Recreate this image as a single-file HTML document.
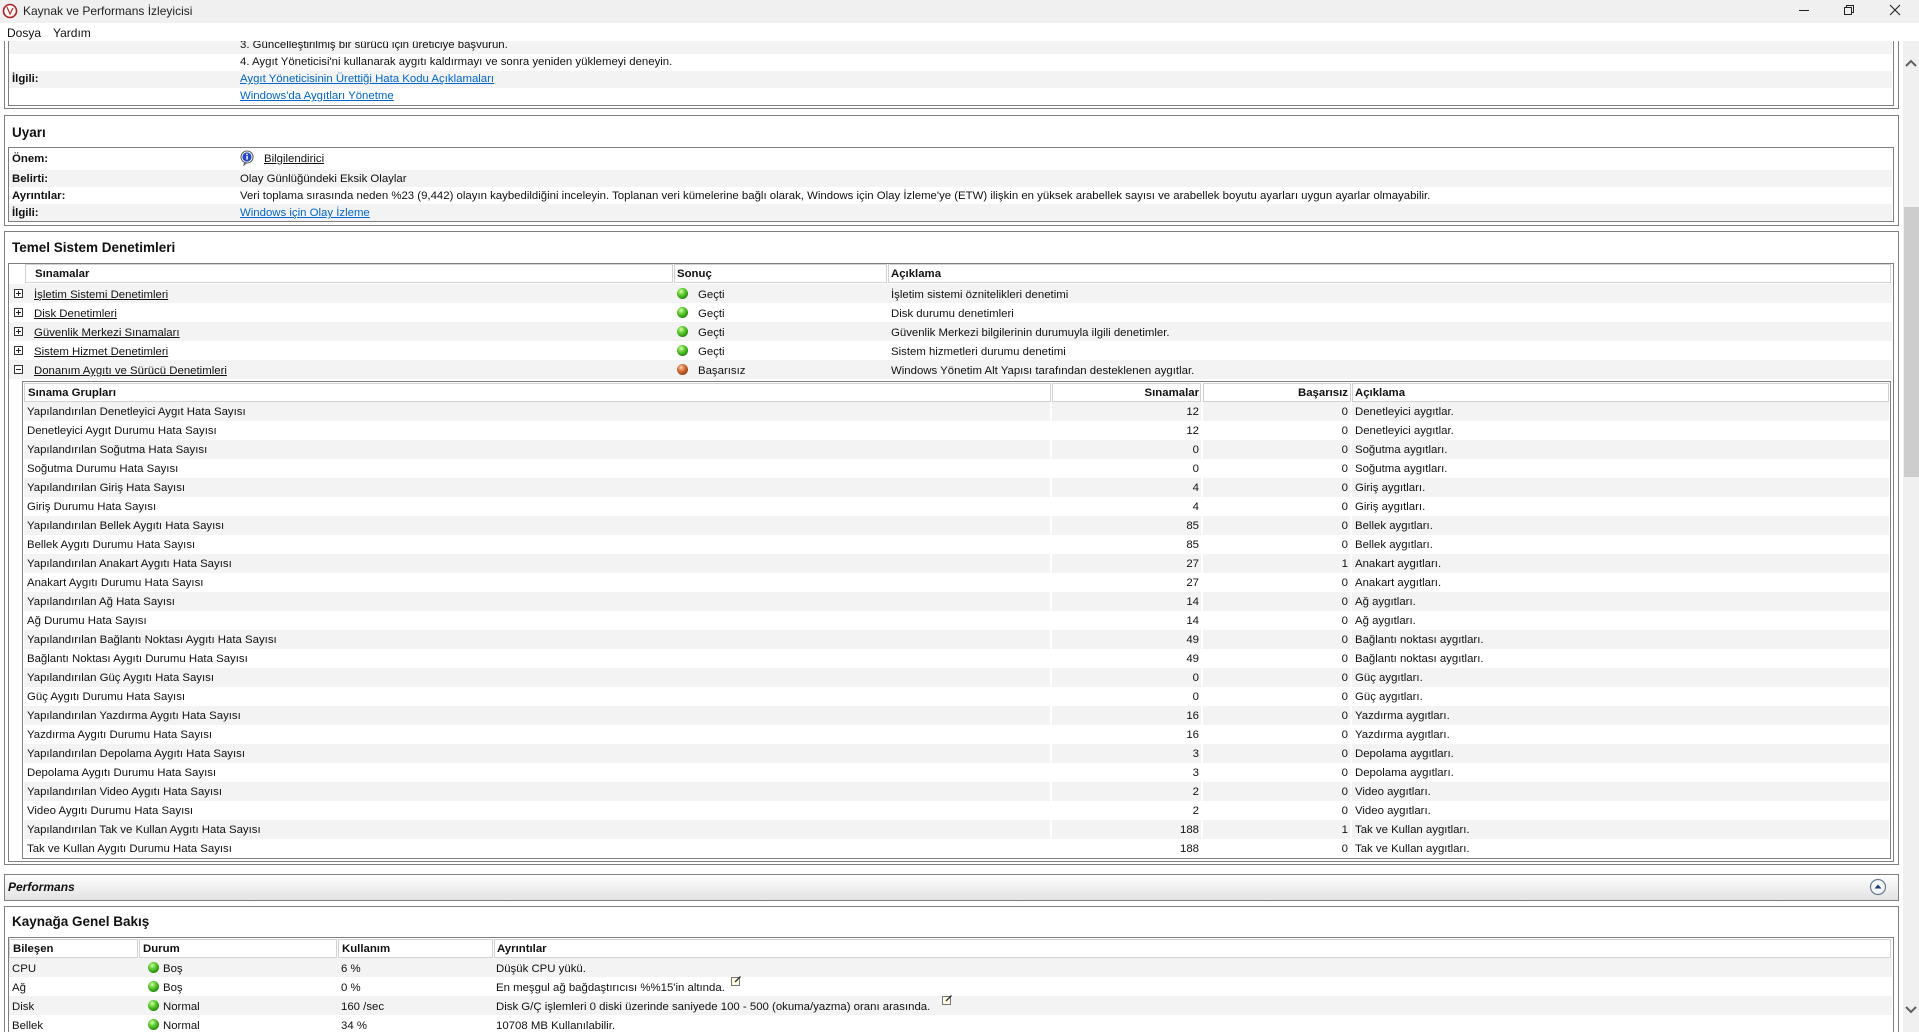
<!DOCTYPE html>
<html><head><meta charset="utf-8">
<style>
*{margin:0;padding:0;box-sizing:border-box}
html,body{width:1919px;height:1032px;overflow:hidden}
body{background:#fff;font-family:"Liberation Sans",Arial,sans-serif;font-size:11.4px;color:#111}
#w{position:relative;width:1919px;height:1032px;overflow:hidden}
.a{position:absolute;white-space:nowrap}
.t{margin-top:1px}
.box{position:absolute;border:1px solid #7f7f7f}
.r{position:absolute;height:19px;line-height:19px}
.sh{background:#f3f3f3}
.b{font-weight:bold}
.lnk{color:#0066cc;text-decoration:underline}
.ul{text-decoration:underline}
.h{font-weight:bold;font-size:13.5px}
.dot{position:absolute;width:11px;height:11px;border-radius:50%;background:radial-gradient(circle at 38% 32%,#d8ffb0 0,#6cd43a 30%,#2e9a14 65%,#15580a 100%)}
.dot.red{background:radial-gradient(circle at 38% 32%,#ffd0b0 0,#d8733c 35%,#a0441a 70%,#5a220a 100%)}
.pl{position:absolute;width:9px;height:9px;border:1px solid #333;background:#fff}
.pl:before{content:"";position:absolute;left:1px;top:3px;width:5px;height:1px;background:#222}
.pl.p:after{content:"";position:absolute;left:3px;top:1px;width:1px;height:5px;background:#222}
.hc{position:absolute;border:1px solid #d2d2d2;height:19px;line-height:19px;font-weight:bold;background:#fff}
.sr{position:absolute;left:24px;width:1865px;height:19px;line-height:21px}
.sr span{position:absolute}
.sr .n{left:3px}.sr .c{right:690px}.sr .f{right:541px}.sr .d{left:1331px}
.gap{position:absolute;width:2px;background:#fff}
</style></head><body><div id="w">

<!-- panel 1 (cut) -->
<div class="box" style="left:4px;top:30px;width:1895px;height:79px"></div>
<div class="box" style="left:8px;top:30px;width:1886px;height:76px"></div>
<div class="r sh" style="left:9px;top:37px;width:1883px;height:17px;line-height:17px"></div>
<div class="r sh" style="left:9px;top:71px;width:1883px;height:17px;line-height:17px"></div>
<div class="a t" style="left:240px;top:38px">3. Güncelleştirilmiş bir sürücü için üreticiye başvurun.</div>
<div class="a t" style="left:240px;top:55px">4. Aygıt Yöneticisi'ni kullanarak aygıtı kaldırmayı ve sonra yeniden yüklemeyi deneyin.</div>
<div class="a b t" style="left:12px;top:72px">İlgili:</div>
<div class="a lnk t" style="left:240px;top:72px">Aygıt Yöneticisinin Ürettiği Hata Kodu Açıklamaları</div>
<div class="a lnk t" style="left:240px;top:89px">Windows'da Aygıtları Yönetme</div>

<!-- title bar -->
<div class="a" style="left:0;top:0;width:1919px;height:23px;background:#f0f0f0"></div>
<svg class="a" style="left:2px;top:3px" width="16" height="16" viewBox="0 0 16 16"><circle cx="8" cy="8" r="6.5" fill="#fff" stroke="#b02020" stroke-width="1.6"/><path d="M5 4 L8 11 L11 5" fill="none" stroke="#c03030" stroke-width="1.3"/></svg>
<div class="a" style="left:23px;top:4px;font-size:12px;color:#222">Kaynak ve Performans İzleyicisi</div>
<div class="a" style="left:1799px;top:10px;width:10px;height:1px;background:#222"></div>
<svg class="a" style="left:1843px;top:4px" width="12" height="12" viewBox="0 0 12 12"><rect x="1.5" y="3.5" width="7" height="7" fill="none" stroke="#222"/><path d="M3.5 3.5V1.5h7v7h-2" fill="none" stroke="#222"/></svg>
<svg class="a" style="left:1889px;top:4px" width="12" height="12" viewBox="0 0 12 12"><path d="M1 1L11 11M11 1L1 11" stroke="#222" stroke-width="1.1"/></svg>

<!-- menu bar -->
<div class="a" style="left:0;top:23px;width:1919px;height:18px;background:#fff"></div>
<div class="a" style="left:7px;top:26px;font-size:12px">Dosya</div>
<div class="a" style="left:53px;top:26px;font-size:12px">Yardım</div>

<!-- scrollbar -->
<div class="a" style="left:1903px;top:41px;width:16px;height:991px;background:#f0f0f0"></div>
<div class="a" style="left:1904px;top:207px;width:15px;height:270px;background:#cdcdcd"></div>
<svg class="a" style="left:1905px;top:59px" width="12" height="8" viewBox="0 0 12 8"><path d="M1 7L6 2L11 7" fill="none" stroke="#606060" stroke-width="2"/></svg>
<svg class="a" style="left:1905px;top:1006px" width="12" height="8" viewBox="0 0 12 8"><path d="M1 1L6 6L11 1" fill="none" stroke="#606060" stroke-width="2"/></svg>

<!-- Uyarı -->
<div class="box" style="left:4px;top:115px;width:1895px;height:111px"></div>
<div class="box" style="left:8px;top:147px;width:1886px;height:75px"></div>
<div class="a h" style="left:12px;top:125px">Uyarı</div>
<div class="r sh" style="left:9px;top:170px;width:1883px;height:17px"></div>
<div class="r sh" style="left:9px;top:204px;width:1883px;height:17px"></div>
<div class="a b t" style="left:12px;top:152px">Önem:</div>
<svg class="a" style="left:240px;top:150px" width="14" height="16" viewBox="0 0 14 16"><path d="M7 1a6 6 0 1 0 0.1 0zM5 12l-1 3 3-2.5" fill="#fff" stroke="#555" stroke-width="1"/><circle cx="7" cy="7" r="4.6" fill="#2448c8"/><rect x="6.3" y="6" width="1.5" height="3.6" fill="#fff"/><circle cx="7" cy="4.5" r="0.9" fill="#fff"/></svg>
<div class="a ul t" style="left:264px;top:152px">Bilgilendirici</div>
<div class="a b t" style="left:12px;top:172px">Belirti:</div>
<div class="a t" style="left:240px;top:172px">Olay Günlüğündeki Eksik Olaylar</div>
<div class="a b t" style="left:12px;top:189px">Ayrıntılar:</div>
<div class="a t" style="left:240px;top:189px">Veri toplama sırasında neden %23 (9,442) olayın kaybedildiğini inceleyin. Toplanan veri kümelerine bağlı olarak, Windows için Olay İzleme'ye (ETW) ilişkin en yüksek arabellek sayısı ve arabellek boyutu ayarları uygun ayarlar olmayabilir.</div>
<div class="a b t" style="left:12px;top:206px">İlgili:</div>
<div class="a lnk t" style="left:240px;top:206px">Windows için Olay İzleme</div>

<!-- Temel -->
<div class="box" style="left:4px;top:231px;width:1895px;height:634px"></div>
<div class="box" style="left:8px;top:263px;width:1886px;height:599px"></div>
<div class="a h" style="left:12px;top:240px">Temel Sistem Denetimleri</div>
<div class="hc" style="left:25px;top:264px;width:648px;padding-left:9px">Sınamalar</div>
<div class="hc" style="left:674px;top:264px;width:213px;padding-left:2px">Sonuç</div>
<div class="hc" style="left:888px;top:264px;width:1003px;padding-left:2px">Açıklama</div>
<div class="r sh" style="left:9px;top:284px;width:1883px"></div>
<div class="r sh" style="left:9px;top:322px;width:1883px"></div>
<div class="r sh" style="left:9px;top:360px;width:1883px"></div>

<div class="pl p" style="left:14px;top:289px"></div><div class="a ul t" style="left:34px;top:288px">İşletim Sistemi Denetimleri</div><div class="dot" style="left:677px;top:288px"></div><div class="a t" style="left:698px;top:288px">Geçti</div><div class="a t" style="left:891px;top:288px">İşletim sistemi öznitelikleri denetimi</div>
<div class="pl p" style="left:14px;top:308px"></div><div class="a ul t" style="left:34px;top:307px">Disk Denetimleri</div><div class="dot" style="left:677px;top:307px"></div><div class="a t" style="left:698px;top:307px">Geçti</div><div class="a t" style="left:891px;top:307px">Disk durumu denetimleri</div>
<div class="pl p" style="left:14px;top:327px"></div><div class="a ul t" style="left:34px;top:326px">Güvenlik Merkezi Sınamaları</div><div class="dot" style="left:677px;top:326px"></div><div class="a t" style="left:698px;top:326px">Geçti</div><div class="a t" style="left:891px;top:326px">Güvenlik Merkezi bilgilerinin durumuyla ilgili denetimler.</div>
<div class="pl p" style="left:14px;top:346px"></div><div class="a ul t" style="left:34px;top:345px">Sistem Hizmet Denetimleri</div><div class="dot" style="left:677px;top:345px"></div><div class="a t" style="left:698px;top:345px">Geçti</div><div class="a t" style="left:891px;top:345px">Sistem hizmetleri durumu denetimi</div>
<div class="pl" style="left:14px;top:365px"></div><div class="a ul t" style="left:34px;top:364px">Donanım Aygıtı ve Sürücü Denetimleri</div><div class="dot red" style="left:677px;top:364px"></div><div class="a t" style="left:698px;top:364px">Başarısız</div><div class="a t" style="left:891px;top:364px">Windows Yönetim Alt Yapısı tarafından desteklenen aygıtlar.</div>

<!-- sub table -->
<div class="box" style="left:22px;top:381px;width:1869px;height:478px"></div>
<div class="hc" style="left:24px;top:383px;width:1027px;padding-left:3px">Sınama Grupları</div>
<div class="hc" style="left:1052px;top:383px;width:149px;text-align:right;padding-right:1px">Sınamalar</div>
<div class="hc" style="left:1203px;top:383px;width:148px;text-align:right;padding-right:2px">Başarısız</div>
<div class="hc" style="left:1352px;top:383px;width:537px;padding-left:2px">Açıklama</div>

<div class="sr sh" style="top:402px"><span class="n">Yapılandırılan Denetleyici Aygıt Hata Sayısı</span><span class="c">12</span><span class="f">0</span><span class="d">Denetleyici aygıtlar.</span></div>
<div class="sr" style="top:421px"><span class="n">Denetleyici Aygıt Durumu Hata Sayısı</span><span class="c">12</span><span class="f">0</span><span class="d">Denetleyici aygıtlar.</span></div>
<div class="sr sh" style="top:440px"><span class="n">Yapılandırılan Soğutma Hata Sayısı</span><span class="c">0</span><span class="f">0</span><span class="d">Soğutma aygıtları.</span></div>
<div class="sr" style="top:459px"><span class="n">Soğutma Durumu Hata Sayısı</span><span class="c">0</span><span class="f">0</span><span class="d">Soğutma aygıtları.</span></div>
<div class="sr sh" style="top:478px"><span class="n">Yapılandırılan Giriş Hata Sayısı</span><span class="c">4</span><span class="f">0</span><span class="d">Giriş aygıtları.</span></div>
<div class="sr" style="top:497px"><span class="n">Giriş Durumu Hata Sayısı</span><span class="c">4</span><span class="f">0</span><span class="d">Giriş aygıtları.</span></div>
<div class="sr sh" style="top:516px"><span class="n">Yapılandırılan Bellek Aygıtı Hata Sayısı</span><span class="c">85</span><span class="f">0</span><span class="d">Bellek aygıtları.</span></div>
<div class="sr" style="top:535px"><span class="n">Bellek Aygıtı Durumu Hata Sayısı</span><span class="c">85</span><span class="f">0</span><span class="d">Bellek aygıtları.</span></div>
<div class="sr sh" style="top:554px"><span class="n">Yapılandırılan Anakart Aygıtı Hata Sayısı</span><span class="c">27</span><span class="f">1</span><span class="d">Anakart aygıtları.</span></div>
<div class="sr" style="top:573px"><span class="n">Anakart Aygıtı Durumu Hata Sayısı</span><span class="c">27</span><span class="f">0</span><span class="d">Anakart aygıtları.</span></div>
<div class="sr sh" style="top:592px"><span class="n">Yapılandırılan Ağ Hata Sayısı</span><span class="c">14</span><span class="f">0</span><span class="d">Ağ aygıtları.</span></div>
<div class="sr" style="top:611px"><span class="n">Ağ Durumu Hata Sayısı</span><span class="c">14</span><span class="f">0</span><span class="d">Ağ aygıtları.</span></div>
<div class="sr sh" style="top:630px"><span class="n">Yapılandırılan Bağlantı Noktası Aygıtı Hata Sayısı</span><span class="c">49</span><span class="f">0</span><span class="d">Bağlantı noktası aygıtları.</span></div>
<div class="sr" style="top:649px"><span class="n">Bağlantı Noktası Aygıtı Durumu Hata Sayısı</span><span class="c">49</span><span class="f">0</span><span class="d">Bağlantı noktası aygıtları.</span></div>
<div class="sr sh" style="top:668px"><span class="n">Yapılandırılan Güç Aygıtı Hata Sayısı</span><span class="c">0</span><span class="f">0</span><span class="d">Güç aygıtları.</span></div>
<div class="sr" style="top:687px"><span class="n">Güç Aygıtı Durumu Hata Sayısı</span><span class="c">0</span><span class="f">0</span><span class="d">Güç aygıtları.</span></div>
<div class="sr sh" style="top:706px"><span class="n">Yapılandırılan Yazdırma Aygıtı Hata Sayısı</span><span class="c">16</span><span class="f">0</span><span class="d">Yazdırma aygıtları.</span></div>
<div class="sr" style="top:725px"><span class="n">Yazdırma Aygıtı Durumu Hata Sayısı</span><span class="c">16</span><span class="f">0</span><span class="d">Yazdırma aygıtları.</span></div>
<div class="sr sh" style="top:744px"><span class="n">Yapılandırılan Depolama Aygıtı Hata Sayısı</span><span class="c">3</span><span class="f">0</span><span class="d">Depolama aygıtları.</span></div>
<div class="sr" style="top:763px"><span class="n">Depolama Aygıtı Durumu Hata Sayısı</span><span class="c">3</span><span class="f">0</span><span class="d">Depolama aygıtları.</span></div>
<div class="sr sh" style="top:782px"><span class="n">Yapılandırılan Video Aygıtı Hata Sayısı</span><span class="c">2</span><span class="f">0</span><span class="d">Video aygıtları.</span></div>
<div class="sr" style="top:801px"><span class="n">Video Aygıtı Durumu Hata Sayısı</span><span class="c">2</span><span class="f">0</span><span class="d">Video aygıtları.</span></div>
<div class="sr sh" style="top:820px"><span class="n">Yapılandırılan Tak ve Kullan Aygıtı Hata Sayısı</span><span class="c">188</span><span class="f">1</span><span class="d">Tak ve Kullan aygıtları.</span></div>
<div class="sr" style="top:839px"><span class="n">Tak ve Kullan Aygıtı Durumu Hata Sayısı</span><span class="c">188</span><span class="f">0</span><span class="d">Tak ve Kullan aygıtları.</span></div>
<div class="gap" style="left:1050px;top:402px;height:456px"></div>
<div class="gap" style="left:1201px;top:402px;height:456px"></div>
<div class="gap" style="left:1350px;top:402px;height:456px"></div>

<!-- Performans bar -->
<div class="box" style="left:4px;top:874px;width:1895px;height:27px;background:linear-gradient(#ffffff,#e2e2e2)"></div>
<div class="a" style="left:8px;top:880px;font-weight:bold;font-style:italic;font-size:12px">Performans</div>
<svg class="a" style="left:1869px;top:878px" width="18" height="18" viewBox="0 0 18 18"><circle cx="9" cy="9" r="7.5" fill="#f4f6f8" stroke="#6a7a90" stroke-width="1.2"/><path d="M5.5 10.5L9 6.5L12.5 10.5Z" fill="#1e3c78"/></svg>

<!-- Kaynağa -->
<div class="box" style="left:4px;top:906px;width:1895px;height:140px"></div>
<div class="box" style="left:8px;top:937px;width:1886px;height:110px"></div>
<div class="a h" style="left:12px;top:914px">Kaynağa Genel Bakış</div>
<div class="hc" style="left:9px;top:939px;width:129px;padding-left:3px">Bileşen</div>
<div class="hc" style="left:139px;top:939px;width:198px;padding-left:3px">Durum</div>
<div class="hc" style="left:338px;top:939px;width:155px;padding-left:3px">Kullanım</div>
<div class="hc" style="left:494px;top:939px;width:1397px;padding-left:2px">Ayrıntılar</div>
<div class="r sh" style="left:9px;top:958px;width:1883px"></div>
<div class="r sh" style="left:9px;top:996px;width:1883px"></div>
<div class="a t" style="left:12px;top:962px">CPU</div><div class="dot" style="left:148px;top:962px"></div><div class="a t" style="left:163px;top:962px">Boş</div><div class="a t" style="left:341px;top:962px">6 %</div><div class="a t" style="left:496px;top:962px">Düşük CPU yükü.</div>
<div class="a t" style="left:12px;top:981px">Ağ</div><div class="dot" style="left:148px;top:981px"></div><div class="a t" style="left:163px;top:981px">Boş</div><div class="a t" style="left:341px;top:981px">0 %</div><div class="a t" style="left:496px;top:981px">En meşgul ağ bağdaştırıcısı %%15'in altında.</div>
<svg class="a" style="left:731px;top:975px" width="11" height="11" viewBox="0 0 11 11"><rect x="0.5" y="2.5" width="8" height="8" fill="#fffbe0" stroke="#777"/><path d="M4 7L9.5 1.5" stroke="#333" stroke-width="1.3"/></svg>
<div class="a t" style="left:12px;top:1000px">Disk</div><div class="dot" style="left:148px;top:1000px"></div><div class="a t" style="left:163px;top:1000px">Normal</div><div class="a t" style="left:341px;top:1000px">160 /sec</div><div class="a t" style="left:496px;top:1000px">Disk G/Ç işlemleri 0 diski üzerinde saniyede 100 - 500 (okuma/yazma) oranı arasında.</div>
<svg class="a" style="left:942px;top:994px" width="11" height="11" viewBox="0 0 11 11"><rect x="0.5" y="2.5" width="8" height="8" fill="#fffbe0" stroke="#777"/><path d="M4 7L9.5 1.5" stroke="#333" stroke-width="1.3"/></svg>
<div class="a t" style="left:12px;top:1019px">Bellek</div><div class="dot" style="left:148px;top:1019px"></div><div class="a t" style="left:163px;top:1019px">Normal</div><div class="a t" style="left:341px;top:1019px">34 %</div><div class="a t" style="left:496px;top:1019px">10708 MB Kullanılabilir.</div>

</div></body></html>
